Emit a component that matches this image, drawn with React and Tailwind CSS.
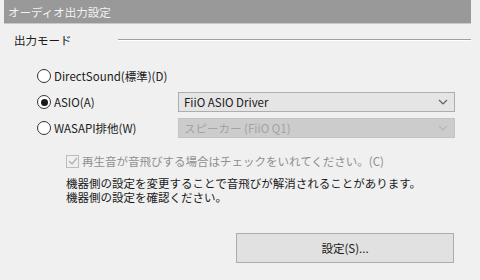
import { useState } from 'react';

const font = { fontFamily: '"Noto Sans CJK JP", "Noto Sans", sans-serif' };

function Radio({ checked, label, onClick }) {
  return (
    <button onClick={onClick} className="flex items-center gap-[3px] w-[141px] h-[20px] text-left">
      <span className="w-[14px] h-[14px] rounded-full border border-[#333333] bg-white flex items-center justify-center shrink-0">
        {checked && <span className="w-[7px] h-[7px] rounded-full bg-[#1a1a1a]" />}
      </span>
      <span className="text-[#1a1a1a] whitespace-nowrap">{label}</span>
    </button>
  );
}

function Chevron({ color }) {
  return (
    <svg width="10" height="6" viewBox="0 0 10 6" className="shrink-0">
      <path d="M1 1 L5 5 L9 1" fill="none" stroke={color} strokeWidth="1.2" />
    </svg>
  );
}

function Select({ value, disabled }) {
  return (
    <div
      className={`w-[277px] h-[20px] border flex items-center justify-between pl-[5px] pr-[6px] ${
        disabled ? 'bg-[#cccccc] border-[#c4c4c4] text-[#a3a3a3]' : 'bg-[#e5e5e5] border-[#adadad] text-[#1a1a1a]'
      }`}
    >
      <span className="whitespace-nowrap">{value}</span>
      <Chevron color={disabled ? '#b5b5b5' : '#606060'} />
    </div>
  );
}

export default function App() {
  const [mode, setMode] = useState('asio');

  return (
    <div className="w-[480px] h-[280px] bg-[#f0f0f0] text-[11.5px] leading-[14px] overflow-hidden" style={font}>
      {/* Title bar */}
      <div className="ml-[4px] w-[467px] h-[24px] bg-[#999999] border-b border-[#c8c8c8] flex items-center pl-[4px] text-[#f2f2f2]">
        オーディオ出力設定
      </div>

      {/* Group heading */}
      <div className="flex items-center mt-[9px] pl-[14px]">
        <span className="text-[#1a1a1a] whitespace-nowrap">出力モード</span>
        <div className="ml-[46px] w-[353px] border-t border-[#a0a0a0] border-b-white border-b mt-[-1px]" />
      </div>

      {/* Radios */}
      <div className="flex flex-col gap-[6px] mt-[19px] pl-[37px]">
        <div className="flex items-center">
          <Radio checked={mode === 'ds'} label="DirectSound(標準)(D)" onClick={() => setMode('ds')} />
        </div>
        <div className="flex items-center">
          <Radio checked={mode === 'asio'} label="ASIO(A)" onClick={() => setMode('asio')} />
          <Select value="FiiO ASIO Driver" />
        </div>
        <div className="flex items-center">
          <Radio checked={mode === 'wasapi'} label="WASAPI排他(W)" onClick={() => setMode('wasapi')} />
          <Select value="スピーカー (FiiO Q1)" disabled />
        </div>
      </div>

      {/* Checkbox */}
      <div className="flex items-center gap-[3px] mt-[16px] pl-[66px] text-[#8f8f8f]">
        <span className="w-[13px] h-[13px] border border-[#bcbcbc] bg-[#f0f0f0] flex items-center justify-center">
          <svg width="10" height="8" viewBox="0 0 10 8">
            <path d="M1 4 L4 7 L9 1" fill="none" stroke="#b0b0b0" strokeWidth="1.3" />
          </svg>
        </span>
        <span className="whitespace-nowrap">再生音が音飛びする場合はチェックをいれてください。(C)</span>
      </div>

      {/* Notes */}
      <div className="mt-[8px] pl-[66px] text-[#1a1a1a]">
        <p className="whitespace-nowrap">機器側の設定を変更することで音飛びが解消されることがあります。</p>
        <p className="whitespace-nowrap">機器側の設定を確認ください。</p>
      </div>

      {/* Settings button */}
      <div className="mt-[29px] pl-[236px]">
        <button className="w-[218px] h-[30px] bg-[#e1e1e1] border border-[#adadad] text-[#1a1a1a] flex items-center justify-center">
          設定(S)...
        </button>
      </div>
    </div>
  );
}
